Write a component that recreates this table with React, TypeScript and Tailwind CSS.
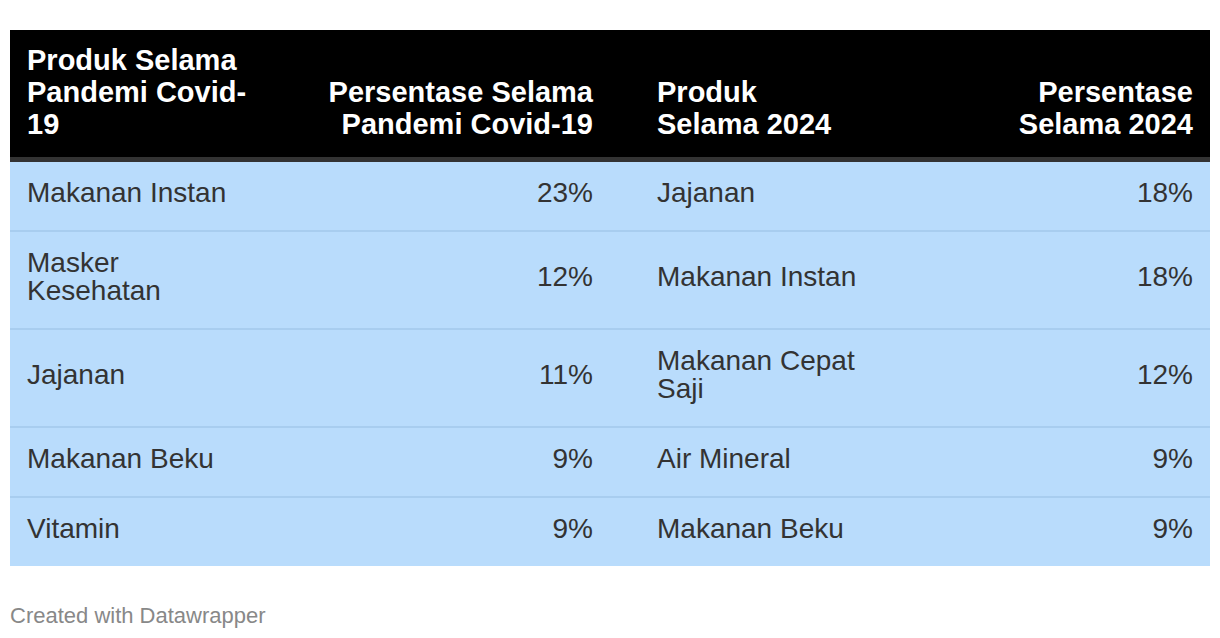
import React from 'react'

type Row = {
  produkCovid: React.ReactNode
  persenCovid: string
  produk2024: React.ReactNode
  persen2024: string
}

const rows: Row[] = [
  { produkCovid: 'Makanan Instan', persenCovid: '23%', produk2024: 'Jajanan', persen2024: '18%' },
  {
    produkCovid: (
      <>
        Masker
        <br />
        Kesehatan
      </>
    ),
    persenCovid: '12%',
    produk2024: 'Makanan Instan',
    persen2024: '18%',
  },
  {
    produkCovid: 'Jajanan',
    persenCovid: '11%',
    produk2024: (
      <>
        Makanan Cepat
        <br />
        Saji
      </>
    ),
    persen2024: '12%',
  },
  { produkCovid: 'Makanan Beku', persenCovid: '9%', produk2024: 'Air Mineral', persen2024: '9%' },
  { produkCovid: 'Vitamin', persenCovid: '9%', produk2024: 'Makanan Beku', persen2024: '9%' },
]

const grid = 'grid grid-cols-[250px_380px_250px_320px]'
const cell = 'pt-[17px] pb-[23px] text-[28px] leading-[28px] text-[#333333]'

export default function App() {
  return (
    <div
      className="min-h-screen bg-white pt-[30px] px-[10px]"
      style={{ fontFamily: '"Liberation Sans", Arial, sans-serif' }}
    >
      {/* Table */}
      <div className="w-[1200px]">
        {/* Header */}
        <div className={`${grid} h-[127px] items-end bg-black pb-[17px] text-[29px] font-bold leading-[32px] text-white`}>
          <div className="pl-[17px]">
            Produk Selama
            <br />
            Pandemi Covid-
            <br />
            19
          </div>
          <div className="pr-[47px] text-right">
            Persentase Selama
            <br />
            Pandemi Covid-19
          </div>
          <div className="pl-[17px]">
            Produk
            <br />
            Selama 2024
          </div>
          <div className="pr-[17px] text-right">
            Persentase
            <br />
            Selama 2024
          </div>
        </div>
        <div className="h-[5px] bg-[#333333]" />

        {/* Body */}
        <div className="bg-[#b9dcfc]">
          {rows.map((r, i) => (
            <div
              key={i}
              className={`${grid} items-center ${i < rows.length - 1 ? 'border-b-2 border-[#a8cdef]' : ''}`}
            >
              <div className={`${cell} pl-[17px]`}>{r.produkCovid}</div>
              <div className={`${cell} pr-[47px] text-right`}>{r.persenCovid}</div>
              <div className={`${cell} pl-[17px]`}>{r.produk2024}</div>
              <div className={`${cell} pr-[17px] text-right`}>{r.persen2024}</div>
            </div>
          ))}
        </div>
      </div>

      {/* Footer */}
      <div className="mt-[37px] text-[22px] leading-[26px] text-[#888888]">Created with Datawrapper</div>
    </div>
  )
}
